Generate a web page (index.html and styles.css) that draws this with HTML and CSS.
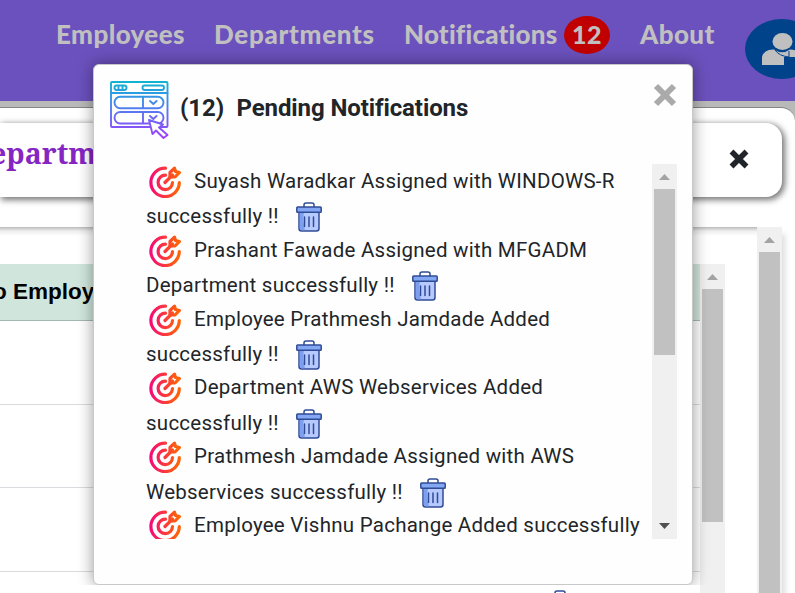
FILE: index.html
```
<!DOCTYPE html>
<html lang="en">
<head>
<meta charset="utf-8">
<title>Pending Notifications</title>
<link rel="stylesheet" href="styles.css">
</head>
<body>
<svg class="defs" aria-hidden="true">
  <defs>
    <linearGradient id="warm" gradientUnits="userSpaceOnUse" x1="0" y1="0" x2="32" y2="0"><stop offset="0" stop-color="#f5067d"/><stop offset=".9" stop-color="#ff6208"/></linearGradient>
    <linearGradient id="cool" gradientUnits="userSpaceOnUse" x1="0" y1="0" x2="0" y2="58"><stop offset="0" stop-color="#10b5cf"/><stop offset=".4" stop-color="#4787ee"/><stop offset="1" stop-color="#a43bfb"/></linearGradient>
    <symbol id="target" viewBox="0 0 32 32">
      <g fill="none" stroke="url(#warm)" stroke-width="3.200" stroke-linecap="round" stroke-linejoin="round">
        <path d="M16.500 2.200A14.200 14.200 0 1 0 30.300 16.500"/>
        <path d="M16.500 9.200A7.200 7.200 0 1 0 23.500 16.500"/>
        <path d="M16 16.500L23.500 9"/>
        <path d="M21 11V6.500L25.500 2.200L26.500 5.500L30.400 6.500L26 11Z"/>
      </g>
    </symbol>
    <symbol id="trash" viewBox="0 0 26 30">
      <g stroke="#304b96" stroke-width="1.5" stroke-linejoin="round">
        <path fill="none" d="M8 5V3Q8 1 10 1H16Q18 1 18 3V5"/>
        <path fill="#b7caff" d="M3 10H23V26.5Q23 29 20.5 29H5.500Q3 29 3 26.5Z"/>
        <path fill="#7e9fee" stroke="none" d="M3.700 10.500H8Q6 19 9 28.300H5.500Q3.700 28 3.700 26Z"/>
        <rect x=".8" y="5" width="24.400" height="5.200" rx=".8" fill="#83a7f2"/>
        <path fill="none" stroke-linecap="round" d="M8.500 15V24.500M13 15V24.500M17.500 15V24.500"/>
      </g>
    </symbol>
  </defs>
</svg>
<div class="app">
  <header class="nav">
    <nav class="links">
      <a class="l-emp">Employees</a><a class="l-dep">Departments</a><a class="l-not">Notifications</a><span class="count">12</span><a class="l-abt">About</a>
    </nav>
    <svg class="avatar" viewBox="0 0 74 60"><ellipse cx="37" cy="30" rx="37" ry="30" fill="#00438a"/><ellipse cx="37.500" cy="22.500" rx="10" ry="8.500" fill="#c0c0c0"/><path fill="#c0c0c0" d="M17 46V38Q19 30 29 30.500Q37 36 45 30.500Q56 31 58 38V46H50V38H39V46Z"/><path fill="none" stroke="#00438a" d="M30 31Q34 37 44 38V32"/></svg>
  </header>
  <main class="page">
    <section class="titlebar"><h1>epartme</h1><svg class="x" viewBox="0 0 20 20"><path d="M2.500 2.500L17.500 17.500M17.500 2.500L2.500 17.500"/></svg></section>
    <section class="panel">
      <div class="body">
        <div class="table">
          <div class="thead">o Employ</div>
          <div class="row r1"></div><div class="row r2"></div><div class="row r3"></div>
          <div class="last"><svg class="bin"><use href="#trash"/></svg></div>
        </div>
        <div class="bar tbar"><i class="up"></i><b></b></div>
      </div>
      <div class="bar pbar"><i class="up"></i><b></b></div>
    </section>
  </main>
</div>
<div class="clip">
<aside class="popup">
  <div class="head">
    <svg class="form" viewBox="0 0 60 58">
      <g fill="none" stroke="url(#cool)" stroke-width="1.900" stroke-linejoin="round" stroke-linecap="round">
        <rect x="1" y="1" width="56.500" height="45" rx="1"/><path d="M1 12H57.500"/>
        <rect x="4.500" y="4.500" width="12" height="4.500" rx="2.200"/><path d="M8.500 5V8.500M12.500 5V8.500"/>
        <rect x="32.500" y="4.500" width="21.500" height="4.500" rx="2.200"/>
        <rect x="4.500" y="15.800" width="49" height="11.500" rx="5.700"/><path d="M33 16V27M40 20L43.300 23L46.600 20"/>
        <rect x="4.500" y="31" width="49" height="11.500" rx="5.700"/><path d="M33 31V42M40 35L43.300 38L46.600 35"/>
        <path fill="#fff" d="M39 39L53 43.500L49 46.500L57.500 54L53.500 57L46 49.500L42.500 53Z"/>
      </g>
    </svg>
    <h2><span class="num">(12)</span><span class="ttl">Pending Notifications</span></h2>
    <svg class="x close" viewBox="0 0 20 20"><path d="M2.500 2.500L17.500 17.500M17.500 2.500L2.500 17.500"/></svg>
  </div>
  <div class="feed">
    <ul>
      <li><p><svg class="tg"><use href="#target"/></svg>Suyash Waradkar Assigned with WINDOWS-R</p><p>successfully !!<svg class="bin"><use href="#trash"/></svg></p></li>
      <li><p><svg class="tg"><use href="#target"/></svg>Prashant Fawade Assigned with MFGADM</p><p>Department successfully !!<svg class="bin"><use href="#trash"/></svg></p></li>
      <li><p><svg class="tg"><use href="#target"/></svg>Employee Prathmesh Jamdade Added</p><p>successfully !!<svg class="bin"><use href="#trash"/></svg></p></li>
      <li><p><svg class="tg"><use href="#target"/></svg>Department AWS Webservices Added</p><p>successfully !!<svg class="bin"><use href="#trash"/></svg></p></li>
      <li><p><svg class="tg"><use href="#target"/></svg>Prathmesh Jamdade Assigned with AWS</p><p>Webservices successfully !!<svg class="bin"><use href="#trash"/></svg></p></li>
      <li><p><svg class="tg"><use href="#target"/></svg>Employee Vishnu Pachange Added successfully</p></li>
    </ul>
    <div class="bar fbar"><i class="up"></i><b></b><i class="down"></i></div>
  </div>
</aside>
</div>
</body>
</html>
```
FILE: styles.css
```
* { box-sizing: border-box; }
body { margin: 0; width: 795px; height: 593px; overflow: hidden; background: #fff; }
h1, h2, ul, p { margin: 0; padding: 0; }
.defs { position: absolute; width: 0; height: 0; }
.app { width: 795px; height: 593px; overflow: hidden; background: #b9b9b9; }
.nav { display: flex; height: 101px; background: #6b51bd; }
.links { display: flex; align-items: center; width: 745px; height: 70px; padding-left: 56px; flex: none; font: 900 26px/70px Lato, sans-serif; letter-spacing: .4px; color: #c0c0c0; }
.links a { white-space: nowrap; flex: none; height: 72px; }
.l-emp { width: 158px; }
.l-dep { width: 190px; letter-spacing: .7px; }
.l-not { width: 160px; letter-spacing: .2px; }
.l-abt { margin-left: 30px; }
.count { width: 46px; height: 38px; border-radius: 50%; background: #c00000; font-size: 25px; line-height: 37px; text-align: center; }
.avatar { width: 74px; height: 60px; margin-top: 19px; flex: none; }
.page { height: 486px; margin-top: 6px; padding-top: 15px; background: #fff; border-top: 1px solid #858585; border-radius: 0 14px 0 0; }
.titlebar { display: flex; justify-content: space-between; width: 782px; height: 74px; padding-right: 33px; border-radius: 0 16px 16px 0; background: #fff; box-shadow: 2px 2px 6px 1px #777; }
h1 { margin-left: -10px; font: bold 28.500px/60px "Noto Serif", "DejaVu Serif Condensed", "DejaVu Serif", serif; color: #8526c3; }
.x { width: 20px; height: 20px; stroke: #212529; stroke-width: 5.500; fill: none; }
.titlebar .x { margin-top: 26px; }
.panel { display: flex; width: 782px; height: 380px; margin-top: 30px; background: linear-gradient(#bbb, #eee 4px, #fff 9px); box-shadow: 3px 7px 6px #ddd; }
.body { display: flex; width: 757px; padding-top: 37px; }
.table { width: 700px; }
.thead { height: 57px; background: #d0e6dc; border-bottom: 1px solid #a5b8af; font: bold 22.500px/55px "Liberation Sans", sans-serif; color: #000; text-indent: -7px; }
.row { border-bottom: 1px solid #d9dbde; }
.r1 { height: 84px; }
.r2 { height: 83px; }
.r3 { height: 84px; }
.last { padding: 18px 0 0 547px; }
.last .bin { margin: 0; }
.bar { display: flex; flex-direction: column; align-items: center; width: 25px; background: #f0f0f0; flex: none; }
.bar b { width: 21px; background: #c1c1c1; }
.up { width: 11px; height: 6px; margin: 10px 0 9px; background: #a3a3a3; clip-path: polygon(50% 0, 100% 100%, 0 100%); }
.down { width: 11px; height: 6px; margin-top: auto; margin-bottom: 10px; background: #505050; clip-path: polygon(0 0, 100% 0, 50% 100%); }
.tbar b { height: 233px; }
.pbar b { height: 350px; }
.fbar b { height: 166px; }
.clip { position: absolute; left: 63px; top: 34px; width: 660px; height: 551px; padding: 30px; overflow: hidden; }
.popup { width: 600px; height: 521px; background: #fefefe; border: 1px solid #c8c8c8; border-radius: 6px; box-shadow: 0 0 16px rgba(0,0,0,.4); }
.head { display: flex; height: 99px; padding: 16px 15px 0 16px; }
.form { width: 60px; height: 58px; flex: none; }
h2 { display: flex; width: 468px; flex: none; padding-left: 10px; font: bold 24px/54px Roboto, sans-serif; letter-spacing: -.1px; color: #212529; white-space: nowrap; }
.num { width: 56.500px; }
.close { margin-top: 2px; width: 24px; height: 24px; margin-left: 15px; stroke: #aaa; stroke-width: 5; flex: none; }
.feed { display: flex; width: 531px; height: 375px; margin-left: 52px; overflow: hidden; font: 20.500px/35px Roboto, sans-serif; color: #212529; letter-spacing: .25px; }
ul { width: 506px; list-style: none; }
li { height: 68.800px; }
p { display: flex; height: 34.400px; white-space: nowrap; }
p + p { padding-top: 1px; }
.tg { width: 32px; height: 32px; margin: 2px 13px 0 3px; flex: none; }
.bin { width: 26px; height: 30px; margin: 3px 0 0 17px; flex: none; }
```
